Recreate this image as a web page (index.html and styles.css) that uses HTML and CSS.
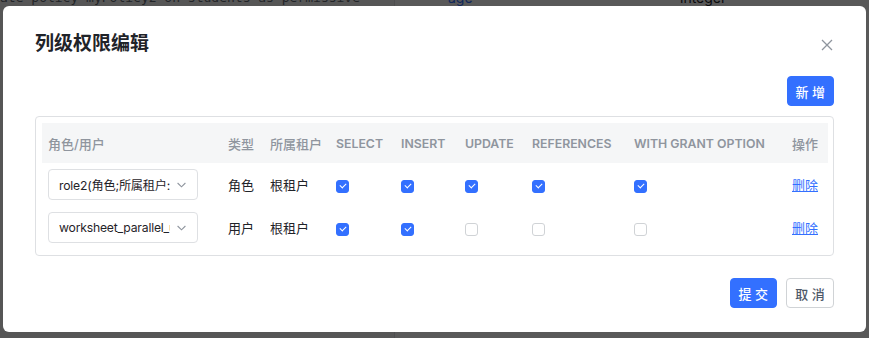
FILE: index.html
```html
<!DOCTYPE html>
<html lang="zh-CN">
<head>
  <meta charset="UTF-8">
  <title>列级权限编辑</title>
  <link rel="stylesheet" href="styles.css">
</head>
<body>
  <div class="page">
    <div class="code-pane">ate policy myPolicy2 on students as permissive</div>
    <div class="table-pane">
      <span class="col-name">age</span>
      <span class="col-type">integer</span>
    </div>
  </div>

  <div class="mask"></div>

  <div class="modal">
    <div class="modal-header">
      <h2 class="modal-title">列级权限编辑</h2>
      <span class="close-btn">
        <svg width="12" height="12" viewBox="0 0 12 12"><path d="M1 1L11 11M11 1L1 11" stroke="#8f959e" stroke-width="1.3" fill="none"/></svg>
      </span>
    </div>

    <div class="toolbar">
      <button class="btn btn-primary">新 增</button>
    </div>

    <div class="table-box">
      <table class="perm-table">
        <colgroup>
          <col style="width:180px">
          <col style="width:42px">
          <col style="width:66px">
          <col style="width:65px">
          <col style="width:64px">
          <col style="width:67px">
          <col style="width:102px">
          <col style="width:158px">
          <col style="width:42px">
        </colgroup>
        <thead>
          <tr>
            <th class="cjk">角色/用户</th>
            <th class="cjk">类型</th>
            <th class="cjk">所属租户</th>
            <th>SELECT</th>
            <th>INSERT</th>
            <th>UPDATE</th>
            <th>REFERENCES</th>
            <th>WITH GRANT OPTION</th>
            <th class="cjk">操作</th>
          </tr>
        </thead>
        <tbody>
          <tr>
            <td>
              <div class="select">
                <span class="select-value">role2(角色;所属租户:根租户)</span>
                <svg class="chevron" width="9" height="6" viewBox="0 0 9 6"><path d="M0.6 1L4.5 4.8L8.4 1" stroke="#8f959e" stroke-width="1.1" fill="none"/></svg>
              </div>
            </td>
            <td>角色</td>
            <td>根租户</td>
            <td><span class="check on"></span></td>
            <td><span class="check on"></span></td>
            <td><span class="check on"></span></td>
            <td><span class="check on"></span></td>
            <td><span class="check on"></span></td>
            <td><a class="link">删除</a></td>
          </tr>
          <tr>
            <td>
              <div class="select">
                <span class="select-value">worksheet_parallel_user</span>
                <svg class="chevron" width="9" height="6" viewBox="0 0 9 6"><path d="M0.6 1L4.5 4.8L8.4 1" stroke="#8f959e" stroke-width="1.1" fill="none"/></svg>
              </div>
            </td>
            <td>用户</td>
            <td>根租户</td>
            <td><span class="check on"></span></td>
            <td><span class="check on"></span></td>
            <td><span class="check"></span></td>
            <td><span class="check"></span></td>
            <td><span class="check"></span></td>
            <td><a class="link">删除</a></td>
          </tr>
        </tbody>
      </table>
    </div>

    <div class="modal-footer">
      <button class="btn btn-primary">提 交</button>
      <button class="btn btn-default">取 消</button>
    </div>
  </div>
</body>
</html>
```

FILE: styles.css
```css
* { box-sizing: border-box; }
body {
  margin: 0;
  width: 869px;
  height: 338px;
  overflow: hidden;
  background: #fff;
  font-family: 'Inter', 'Noto Sans CJK SC', sans-serif;
  color: #1f2329;
}

/* page behind the dialog */
.page {
  display: flex;
  margin-top: -10px;
  height: 348px;
}
.code-pane {
  width: 395px;
  background: #f5f6f7;
  font-family: 'DejaVu Sans Mono', monospace;
  font-size: 13px;
  line-height: 16px;
  color: #646a73;
  white-space: nowrap;
  overflow: hidden;
  border-right: 1px solid #dee0e3;
}
.table-pane {
  display: flex;
  padding-left: 53px;
  font-size: 14px;
  line-height: 16px;
}
.col-name {
  width: 232px;
  color: #3370ff;
}
.col-type { color: #1f2329; }

.mask {
  position: fixed;
  inset: 0;
  background: rgba(0, 0, 0, 0.65);
}

/* dialog */
.modal {
  position: fixed;
  left: 3px;
  top: 6px;
  width: 863px;
  height: 326px;
  background: #fff;
  border-radius: 6px;
  padding: 26px 32px 24px;
}
.modal-header {
  display: flex;
  align-items: center;
  justify-content: space-between;
  height: 24px;
}
.modal-title {
  margin: 0;
  font-size: 19px;
  line-height: 24px;
  font-weight: 600;
  color: #1f2329;
}
.close-btn {
  display: flex;
  margin-right: 1px;
  margin-top: 1px;
}

.toolbar {
  display: flex;
  justify-content: flex-end;
  margin-top: 20px;
}

.btn {
  height: 30px;
  padding: 0 8px;
  min-width: 47px;
  border-radius: 4px;
  font-family: inherit;
  font-size: 13px;
  font-weight: 500;
  cursor: pointer;
}
.btn-primary {
  background: #3370ff;
  border: 1px solid #3370ff;
  color: #fff;
}
.btn-default {
  background: #fff;
  border: 1px solid #d0d3d6;
  color: #4e5969;
  min-width: 48px;
}

.table-box {
  margin-top: 10px;
  border: 1px solid #dee0e3;
  border-radius: 4px;
  padding: 6px;
}
.perm-table {
  width: 786px;
  table-layout: fixed;
  border-collapse: collapse;
  font-size: 13px;
}
.perm-table th {
  height: 40px;
  padding: 0 6px;
  background: #f5f6f7;
  text-align: left;
  font-size: 12.3px;
  font-weight: 600;
  color: #8f959e;
  white-space: nowrap;
}
.perm-table th.cjk {
  font-size: 13px;
  font-weight: 500;
}
.perm-table td {
  height: 43px;
  padding: 0 6px;
  color: #1f2329;
  white-space: nowrap;
}

.select {
  display: flex;
  align-items: center;
  width: 150px;
  height: 31px;
  padding: 0 11px 0 10px;
  border: 1px solid #dee0e3;
  border-radius: 4px;
  background: #fff;
}
.select-value {
  flex: 1;
  overflow: hidden;
  white-space: nowrap;
  font-size: 12.2px;
  letter-spacing: -0.2px;
  color: #1f2329;
}
.chevron {
  margin-left: 7px;
  flex-shrink: 0;
}

.check {
  display: inline-block;
  width: 13px;
  height: 13px;
  border: 1px solid #d0d3d6;
  border-radius: 3px;
  background: #fff;
  vertical-align: middle;
  position: relative;
  top: 1px;
}
.check.on {
  background: #3370ff;
  border-color: #3370ff;
}
.check.on::after {
  content: '';
  position: absolute;
  left: 3px;
  top: 2px;
  width: 5px;
  height: 3px;
  border-left: 1.3px solid #fff;
  border-bottom: 1.3px solid #fff;
  transform: rotate(-45deg);
}

.link {
  color: #3370ff;
  text-decoration: underline;
  cursor: pointer;
}

.modal-footer {
  display: flex;
  justify-content: flex-end;
  gap: 9px;
  margin-top: 22px;
}
```
